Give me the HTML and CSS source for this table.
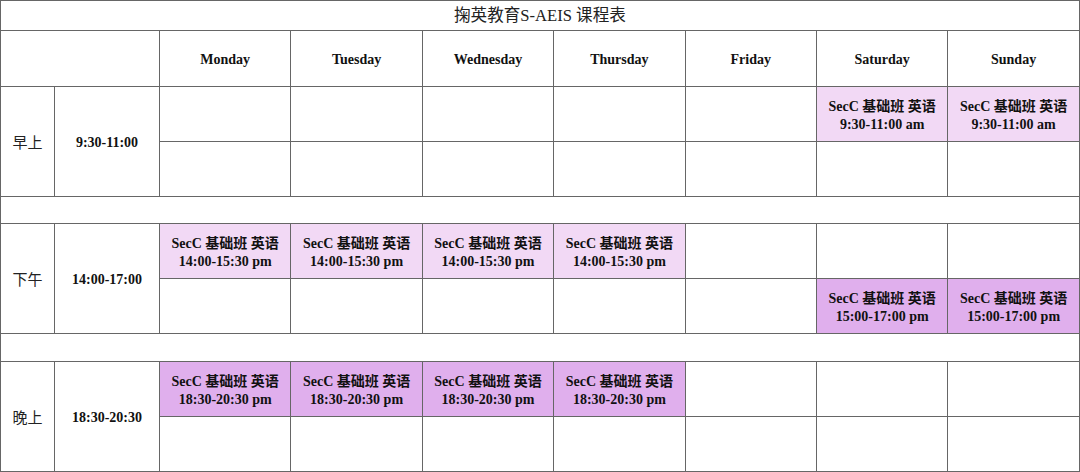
FILE: index.html
```html
<!DOCTYPE html>
<html lang="zh">
<head>
<meta charset="utf-8">
<title>掬英教育S-AEIS 课程表</title>
<link rel="stylesheet" href="styles.css">
</head>
<body>
<table class="schedule">
  <colgroup>
    <col class="c-period"><col class="c-time">
    <col class="c-day"><col class="c-day"><col class="c-day"><col class="c-day"><col class="c-day"><col class="c-day"><col class="c-day">
  </colgroup>
  <tr class="r-title"><td colspan="9" class="title">掬英教育S-AEIS 课程表</td></tr>
  <tr class="r-head">
    <td colspan="2"></td>
    <td class="day">Monday</td><td class="day">Tuesday</td><td class="day">Wednesday</td><td class="day">Thursday</td><td class="day">Friday</td><td class="day">Saturday</td><td class="day">Sunday</td>
  </tr>
  <tr class="r-slot">
    <td rowspan="2" class="period">早上</td><td rowspan="2" class="time">9:30-11:00</td>
    <td></td><td></td><td></td><td></td><td></td>
    <td class="cls light">SecC 基础班 英语<br>9:30-11:00 am</td>
    <td class="cls light">SecC 基础班 英语<br>9:30-11:00 am</td>
  </tr>
  <tr class="r-slot"><td></td><td></td><td></td><td></td><td></td><td></td><td></td></tr>
  <tr class="r-gap"><td colspan="9"></td></tr>
  <tr class="r-slot">
    <td rowspan="2" class="period">下午</td><td rowspan="2" class="time">14:00-17:00</td>
    <td class="cls light">SecC 基础班 英语<br>14:00-15:30 pm</td>
    <td class="cls light">SecC 基础班 英语<br>14:00-15:30 pm</td>
    <td class="cls light">SecC 基础班 英语<br>14:00-15:30 pm</td>
    <td class="cls light">SecC 基础班 英语<br>14:00-15:30 pm</td>
    <td></td><td></td><td></td>
  </tr>
  <tr class="r-slot">
    <td></td><td></td><td></td><td></td><td></td>
    <td class="cls dark">SecC 基础班 英语<br>15:00-17:00 pm</td>
    <td class="cls dark">SecC 基础班 英语<br>15:00-17:00 pm</td>
  </tr>
  <tr class="r-gap2"><td colspan="9"></td></tr>
  <tr class="r-slot">
    <td rowspan="2" class="period">晚上</td><td rowspan="2" class="time">18:30-20:30</td>
    <td class="cls dark">SecC 基础班 英语<br>18:30-20:30 pm</td>
    <td class="cls dark">SecC 基础班 英语<br>18:30-20:30 pm</td>
    <td class="cls dark">SecC 基础班 英语<br>18:30-20:30 pm</td>
    <td class="cls dark">SecC 基础班 英语<br>18:30-20:30 pm</td>
    <td></td><td></td><td></td>
  </tr>
  <tr class="r-slot"><td></td><td></td><td></td><td></td><td></td><td></td><td></td></tr>
</table>
</body>
</html>
```

FILE: styles.css
```css
html, body {
  margin: 0;
  padding: 0;
  background: #ffffff;
}

.schedule {
  border-collapse: collapse;
  table-layout: fixed;
  width: 1079px;
  font-family: "Liberation Serif", "Noto Sans CJK SC", serif;
  color: #111;
}

.c-period { width: 54px; }
.c-time { width: 105px; }
.c-day { width: 131.4px; }

.schedule td {
  border: 1px solid #666;
  padding: 0;
  text-align: center;
  vertical-align: middle;
  font-size: 14px;
  line-height: 18px;
}

.r-title td { height: 29px; }
.r-head td { height: 55px; }
.r-slot td { height: 54px; }
.r-gap td { height: 26px; }
.r-gap2 td { height: 27px; }

.schedule .title {
  font-size: 16.6px;
  font-weight: normal;
  color: #222;
  padding-top: 1px;
  height: 28px;
}

.schedule .day {
  font-weight: bold;
  padding-top: 2px;
  height: 53px;
}

.schedule .period {
  font-size: 15px;
  color: #222;
  padding-top: 2px;
  height: auto;
}

.schedule .time {
  font-weight: bold;
  padding-top: 2px;
  height: auto;
}

.schedule .cls {
  font-weight: bold;
  padding-top: 3px;
  height: 51px;
}

.light { background: #f2d9f5; }
.dark { background: #e0afed; }
```
